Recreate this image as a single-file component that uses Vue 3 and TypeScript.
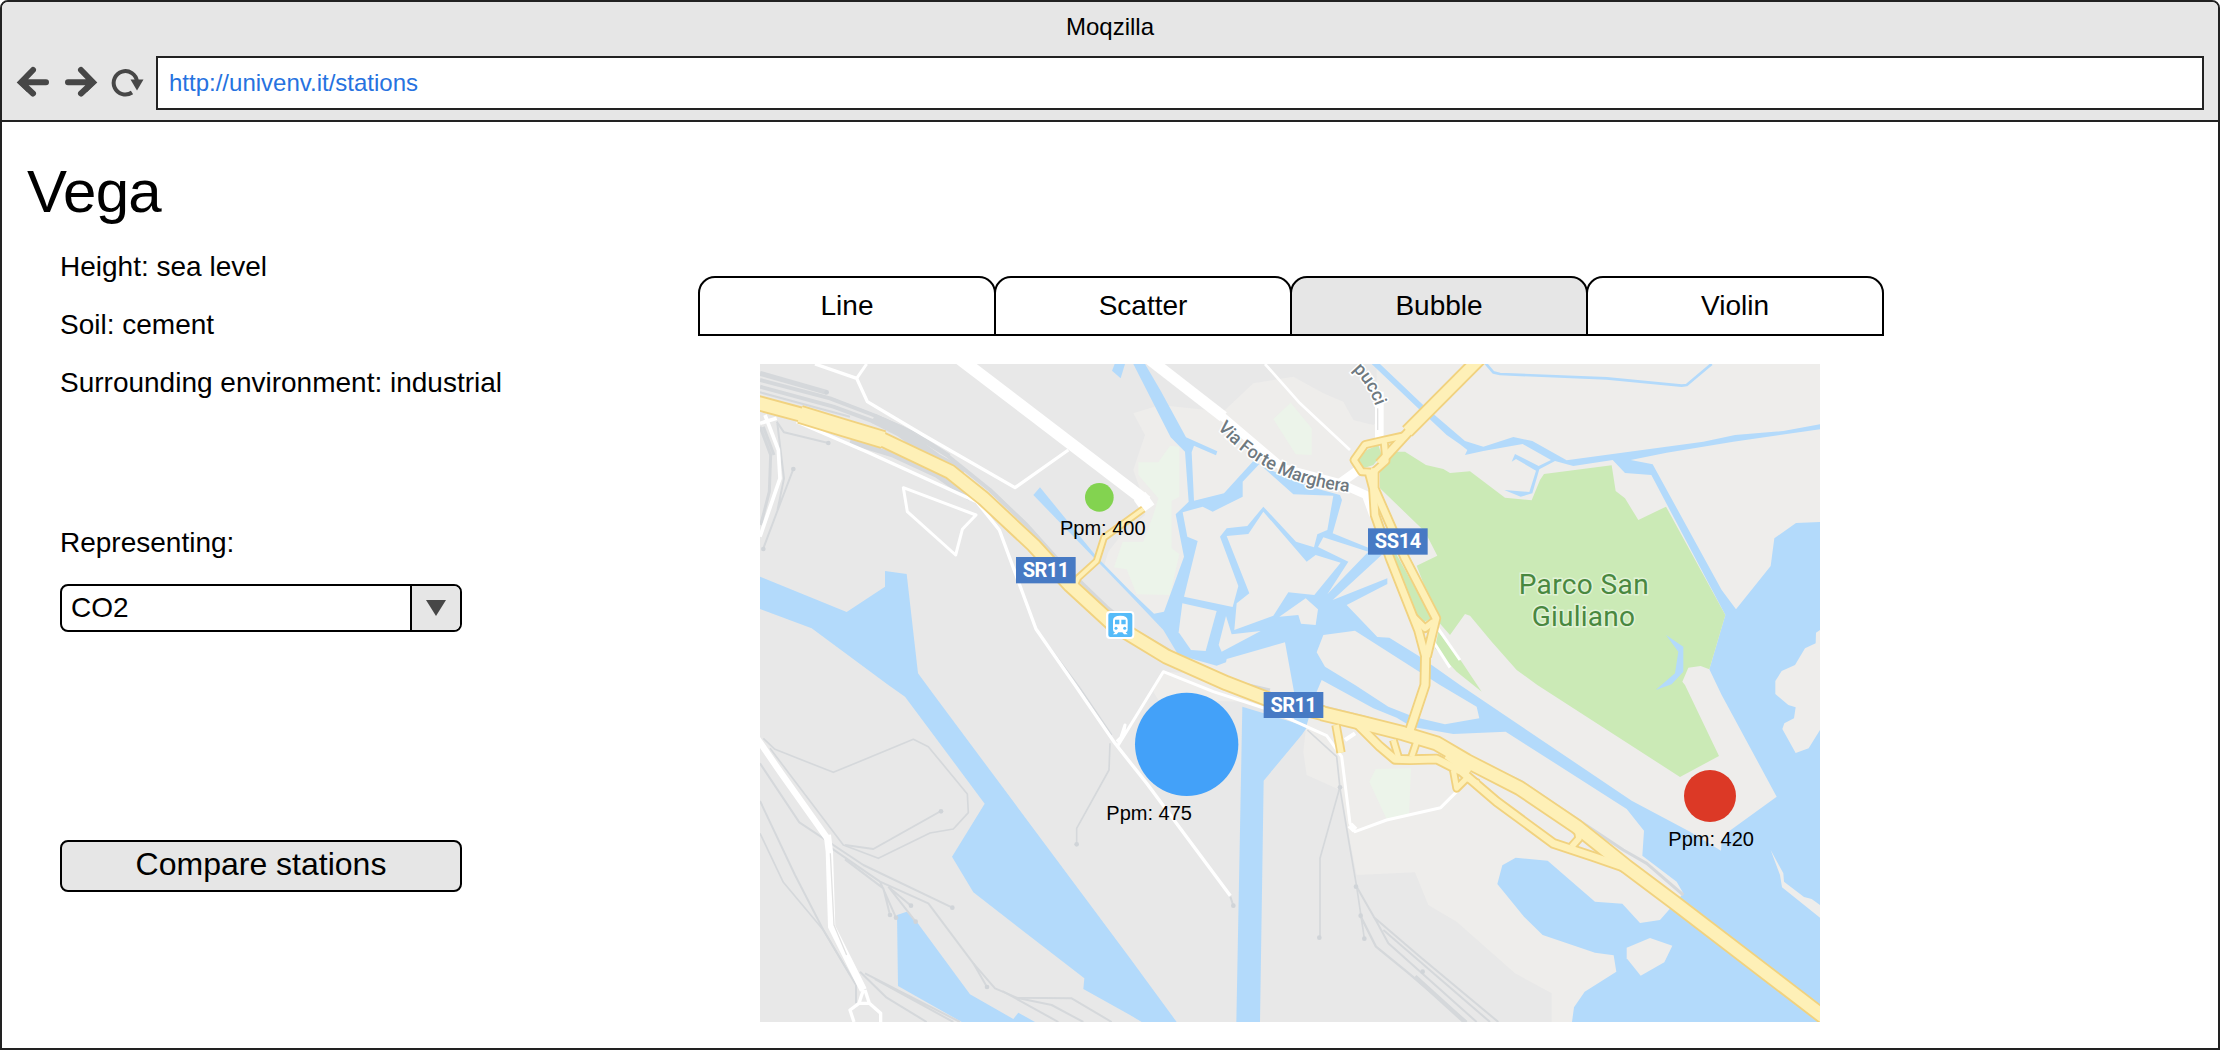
<script setup lang="ts">
interface Stroke { d: string; w: number }
interface Bubble { x: number; y: number; r: number; color: string; label: string; lx: number; ly: number }

const facts: string[] = ['Height: sea level', 'Soil: cement', 'Surrounding environment: industrial']
const tabs: string[] = ['Line', 'Scatter', 'Bubble', 'Violin']
const activeTab = 'Bubble'

const bubbles: Bubble[] = [
  { x: 1048, y: 427, r: 43, color: '#83d350', label: 'Ppm: 400', lx: 930, ly: 541 },
  { x: 1310, y: 1168, r: 155, color: '#43a1f9', label: 'Ppm: 475', lx: 1069, ly: 1395 },
  { x: 2880, y: 1323, r: 78, color: '#dc3926', label: 'Ppm: 420', lx: 2755, ly: 1473 },
]

const suburb =
  '1880,27 1880,200 1870,210 1810,195 1780,140 1720,115 1630,65 1510,85 1425,165 1370,165 1230,150 1150,175 1185,240 1150,345 1180,430 1185,480 1110,545 1075,590 1060,640 1210,775 1290,900 1400,960 1240,950 1210,1010 1225,1035 1500,1040 1670,1100 1660,1190 1670,1260 1770,1305 1820,1560 1995,1552 2035,1650 2120,1700 2295,1855 2405,1915 2405,2001 3210,2001 3210,27'

const water: string[] = [
  '30,665 290,771 405,695 405,648 470,657 504,955 552,1020 1140,1810 1280,2001 1175,2001 1140,1980 1000,1902 1003,1870 670,1612 606,1505 704,1346 465,1025 415,990 185,820 30,762',
  '441,1680 470,1670 500,1700 660,1918 790,1992 805,1973 855,2001 635,2001 444,1893',
  '1477,1055 1672,1115 1655,1140 1541,1277 1530,2001 1459,2001',
  '1150,27 1185,27 1232,107 1308,247 1402,289 1398,301 1332,272 1325,292 1332,437 1422,415 1510,318 1550,340 1680,395 1770,420 1776,435 1748,535 1855,578 1895,600 1748,735 1912,670 1912,687 1790,750 1882,846 1918,848 2010,905 2130,990 2260,1078 2645,1337 2820,1430 2913,1487 2915,1455 2935,1430 3080,1325 2915,1020 2878,943 2926,780 2704,360 2625,354 2588,315 2470,333 2415,318 2368,343 2347,415 2312,425 2263,405 2338,411 2358,347 2298,312 2285,320 2295,297 2366,333 2403,315 2318,267 2200,288 2145,300 2152,285 2130,268 2090,240 2010,165 1865,27 1890,27 2025,155 2145,258 2200,275 2290,246 2347,258 2450,316 2860,260 2955,240 3100,228 3210,208 3210,223 2950,260 2750,293 2642,315 2708,328 2915,705 2958,763 3062,633 3073,550 3138,504 3210,501 3210,2001 2466,2001 2472,1957 2504,1910 2599,1850 2591,1801 2535,1793 2378,1740 2322,1685 2242,1587 2257,1531 2297,1508 2393,1517 2535,1640 2617,1646 2670,1704 2730,1695 2765,1655 2800,1615 2780,1580 2677,1502 2682,1427 2630,1362 2267,1130 2110,1137 1985,1115 1940,1088 1870,1060 1715,975 1700,1010 1670,1110 1632,1100 1632,1010 1605,862 1430,912 1428,922 1400,932 1285,900 1240,825 1140,720 850,420 870,397 1040,605 1140,707 1212,776 1242,770 1302,605 1277,478 1316,440 1305,290 1262,247',
  '1112,70 1086,47 1094,27 1125,27',
]

const islands: string[] = [
  '1298,472 1358,455 1388,470 1478,425 1478,380 1528,327 1630,418 1750,422 1732,525 1702,538 1692,577 1638,560 1540,455 1492,513 1430,520 1410,545 1465,693 1448,756 1302,725 1343,558 1312,545',
  '1430,543 1495,537 1540,470 1670,620 1697,600 1772,623 1693,720 1615,712 1570,782 1453,825 1460,745 1498,715',
  '1297,745 1400,768 1367,888 1323,885 1286,832',
  '1428,783 1445,838 1532,828 1415,890 1406,870',
  '1588,785 1667,730 1704,763 1697,810 1653,806 1645,780',
  '1720,547 1855,590 1732,718 1795,620 1704,576',
  '1720,840 1815,827 2070,990 2180,1055 2188,1090 2085,1108 1995,1087 1915,1055 1815,990 1725,935 1700,892',
  '3210,825 3198,833 3197,865 3165,880 3135,930 3095,948 3076,978 3076,1017 3115,1050 3137,1057 3132,1090 3103,1105 3097,1122 3137,1194 3176,1180 3210,1125',
  '2630,1778 2700,1749 2767,1772 2743,1822 2672,1862 2630,1810',
  '3062,1485 3100,1555 3102,1580 3162,1626 3185,1632 3210,1650 3210,1688 3096,1597 3090,1560',
]

const meadows: string[] = [
  '1570,192 1622,143 1685,220 1685,300 1637,298',
  '1165,322 1225,322 1260,272 1288,275 1288,425 1265,437 1265,580 1288,597 1260,720 1160,718 1130,643 1092,637 1118,560 1180,560 1210,480 1225,430 1165,360',
  '1877,1242 1983,1240 1977,1378 1910,1393 1858,1280',
]

const parks: string[] = [
  '1890,340 1940,290 1965,290 2028,330 2080,342 2100,354 2160,349 2265,428 2345,436 2370,375 2382,357 2585,331 2597,408 2625,430 2665,495 2748,455 2926,780 2878,943 2852,933 2815,938 2797,980 2805,990 2907,1203 2790,1266 2362,990 2300,945 2225,860 2160,782 2145,777 2100,840 2065,800 2000,632 2062,602 2025,530 1890,400',
  '2065,830 2135,920 2195,1010 2120,950 2055,880',
  '1880,460 1935,590 2045,790 2015,805 1995,790',
  '1820,320 1850,285 1885,270 1895,300 1870,330 1840,340',
]
const pond = '2748,840 2800,875 2800,950 2765,988 2717,1005 2775,955 2785,890'

const rails: Stroke[] = [
  { d: 'M30 55 L230 112', w: 15 },
  { d: 'M30 75 L240 130 L370 180 L460 220 L590 300 L720 405 L830 510 L900 590', w: 12 },
  { d: 'M30 95 L250 155 L400 210', w: 12 },
  { d: 'M30 112 L300 185', w: 6 },
  { d: 'M370 190 L450 230 L560 310 L640 355', w: 30 },
  { d: 'M240 128 L400 190 L500 235 L600 300', w: 5 },
  { d: 'M300 260 L430 300 L560 360 L660 430', w: 16 },
  { d: 'M720 405 L840 520 L930 620 L1070 755 L1160 830 L1290 905 L1430 975 L1560 1005', w: 10 },
  { d: 'M80 200 L102 232 L235 264', w: 6 },
  { d: 'M82 205 L102 370 L82 468 L40 580 M130 342 L82 468', w: 6 },
  { d: 'M30 215 L62 300 L58 410 L32 510 M40 215 L72 300', w: 9 },
  { d: 'M858 822 L990 1000 L1085 1140', w: 5 },
  { d: 'M40 1150 L75 1183 L250 1252 L490 1153 L535 1175 L652 1317 L655 1373 L610 1422 L540 1434 L385 1510 L280 1470 L60 1180', w: 5 },
  { d: 'M285 1470 L370 1482 L573 1368', w: 6 },
  { d: 'M30 1225 L148 1402 L340 1530 L607 1658', w: 6 },
  { d: 'M245 1480 L390 1580 L535 1645 L670 1825 L735 1900 L800 1928 L965 1930 L1085 2001', w: 6 },
  { d: 'M285 1513 L400 1600 L420 1680 M390 1580 L438 1688 M415 1595 L497 1700 M415 1595 L483 1652', w: 6 },
  { d: 'M670 1825 L711 1896 M757 1908 L925 2001 M800 1928 L905 1950 L1000 2001', w: 6 },
  { d: 'M30 1338 L135 1560 L220 1725 L318 1890 V1945', w: 6 },
  { d: 'M30 1435 L100 1582 L220 1725 L300 1860', w: 5 },
  { d: 'M330 1850 L410 1928 L530 2001 M345 1855 L630 2001 M375 1872 L610 2001', w: 6 },
  { d: 'M1080 1165 L1077 1245 L980 1420 V1465', w: 5 },
  { d: 'M1441 1625 L1450 1652', w: 6 },
  { d: 'M1672 1125 L1760 1205 L1770 1300 L1798 1468 L1820 1595 L1843 1750', w: 5 },
  { d: 'M1770 1295 L1710 1510 V1745', w: 5 },
  { d: 'M1820 1595 L1880 1700 L1915 1765 L2180 2001 M1870 1685 L2010 1805 L2245 2001 M1900 1725 L2220 2001', w: 6 },
  { d: 'M1830 1680 L1878 1775 L1970 1850 L2150 2001', w: 7 },
  { d: 'M1995 1865 L2145 2001', w: 13 },
  { d: 'M1720 1055 L1840 1085 L2030 1145 L2250 1250 L2315 1280 L2440 1365 L2620 1485 L2690 1525 L2800 1620', w: 9 },
]
const railEnds: number[][] = [
  [230, 112], [235, 264], [130, 342], [40, 582], [573, 1369], [607, 1658], [420, 1680], [438, 1688], [483, 1652],
  [497, 1700], [711, 1896], [980, 1468], [1450, 1652], [1708, 1748], [1843, 1751], [1770, 1297], [1818, 1595], [1832, 1682], [2018, 1850],
]

const streets: Stroke[] = [
  { d: 'M195 27 L320 70 L352 140 L520 240 L795 398 L955 285', w: 10 },
  { d: 'M320 70 L350 27', w: 9 },
  { d: 'M630 12 L1190 440', w: 37 },
  { d: 'M1165 455 L1200 430', w: 46 },
  { d: 'M30 205 L80 190 M45 180 L85 285 L90 370 L30 545', w: 11 },
  { d: 'M140 200 L350 290 L680 440 L748 525 L858 822 L975 990 L1095 1165 L1190 1285 L1441 1622', w: 10 },
  { d: 'M460 398 L678 480 L637 523 L617 600 L472 470 Z', w: 9 },
  { d: 'M1100 1160 L1120 1140 L1125 1110 L1105 1170 L1240 950 L1390 1010 L1560 1065 L1730 1142 L1775 1205 L1800 1405 L1815 1430 L1910 1395 L2072 1358 L2120 1310', w: 9 },
  { d: 'M1785 1155 L1815 1135', w: 12 },
  { d: 'M1800 1410 L1815 1425', w: 20 },
  { d: 'M1545 27 L1650 145 L1800 285', w: 8 },
  { d: 'M1197 12 L1420 185', w: 34 },
  { d: 'M1400 170 L1600 340 L1770 385 L1848 420 L1870 480', w: 25 },
  { d: 'M1770 385 L1825 345', w: 28 },
  { d: 'M1888 110 L1888 250', w: 26 },
  { d: 'M2050 800 L2130 915 M2050 860 L2100 938', w: 9 },
  { d: 'M20 1148 L90 1250 L232 1450', w: 19 },
  { d: 'M232 1440 L238 1490 L245 1715 L340 1905', w: 22 },
  { d: 'M340 1905 L327 1945 L300 1965 L312 2001 M345 1905 L358 1945 L392 1975 V2001 M327 1945 H358', w: 10 },
]

const highways: Stroke[] = [
  { d: 'M20 143 L150 178 L400 255 L600 350 L700 430 L850 570 L960 690 L1085 805 L1250 905 L1430 985 L1560 1035 L1720 1075', w: 48 },
  { d: 'M150 178 L280 218 L400 254', w: 57 },
  { d: 'M1715 1075 L1840 1105 L1960 1135 L2060 1165 L2150 1218 L2310 1300 L2480 1415 L2630 1535 L2770 1640 L3240 2000', w: 48 },
  { d: 'M1800 1085 L1890 1175 L1935 1213 L1980 1214 L2060 1212 L2135 1250 L2240 1340 L2410 1465 L2530 1505 L2660 1550', w: 32 },
  { d: 'M1930 1155 L1945 1205 M2005 1145 L1985 1205', w: 26 },
  { d: 'M1758 1110 L1773 1193', w: 28 },
  { d: 'M2110 1245 L2120 1300 L2150 1270 L2185 1285', w: 26 },
  { d: 'M2090 1200 L2160 1250', w: 34 },
  { d: 'M2482 1420 L2487 1450 L2465 1475', w: 28 },
  { d: 'M2190 10 L1972 229', w: 44 },
  { d: 'M1985 220 L1888 326', w: 32 },
  { d: 'M1960 243 L1900 256 L1845 269 L1812 315 L1835 350 L1870 352 L1908 318 L1903 262', w: 27 },
  { d: 'M1858 355 L1870 400 L1875 480 L1920 610 L2005 825 L2025 900', w: 31 },
  { d: 'M1873 340 L1873 400 L1965 610 L2058 790 L2030 905', w: 31 },
  { d: 'M1990 785 L2025 820 L2050 800', w: 28 },
  { d: 'M2027 895 L2025 990 L1980 1125', w: 33 },
  { d: 'M1180 462 L1062 548 L1040 618 L985 668 L965 710', w: 23 },
]
</script>

<template>
  <div class="window">
    <header class="chrome">
      <div class="title">Moqzilla</div>
      <div class="toolbar">
        <svg class="nav" width="156" height="54" viewBox="0 0 156 54" fill="none">
          <g stroke="#474747" stroke-width="6" stroke-linecap="round">
            <path d="M46 26.3H22M33 14L21 26.3L33 37.5" />
            <path d="M68 26.3H92M81 14L93 26.3L81 37.5" />
          </g>
          <path d="M17.5 26.3L27 17v19z M96.500 26.3L87 17v19z" fill="#474747" />
          <path d="M132 36.500a11.700 11.700 0 1 1 5-11" stroke="#474747" stroke-width="4" />
          <path d="M130.500 23.500h13l-6.500 11z" fill="#474747" />
        </svg>
        <div class="address">http://univenv.it/stations</div>
      </div>
    </header>

    <main class="page">
      <section class="station">
        <h1>Vega</h1>
        <p v-for="fact in facts" :key="fact" class="fact">{{ fact }}</p>
        <label class="caption">Representing:</label>
        <div class="select">
          <span class="value">CO2</span>
          <span class="arrow"><svg width="20" height="16" viewBox="0 0 20 16"><path d="M0 0h20L10 16z" fill="#474747" /></svg></span>
        </div>
        <button class="compare" type="button">Compare stations</button>
      </section>

      <section class="chart">
        <nav class="tabs">
          <span v-for="tab in tabs" :key="tab" class="tab" :class="{ active: tab === activeTab }">{{ tab }}</span>
        </nav>
        <svg class="map" width="1060" height="658" viewBox="30 27 3180 1974">
          <rect x="30" y="27" width="3180" height="1974" fill="#e8e8e8" />
          <polygon :points="suburb" fill="#eeedeb" />
          <polygon v-for="p in meadows" :key="p" :points="p" fill="#ecf4ea" />
          <polygon v-for="p in water" :key="p" :points="p" fill="#b3dafb" />
          <polygon v-for="p in islands" :key="p" :points="p" fill="#eeedeb" />
          <polygon v-for="p in parks" :key="p" :points="p" fill="#cbeab6" />
          <polygon :points="pond" fill="#b3dafb" />
          <path d="M2207 25L2230 52L2250 57L2570 70L2795 92L2810 90L2885 27" class="line" stroke="#b3dafb" stroke-width="8" />
          <path v-for="s in rails" :key="s.d" :d="s.d" class="line" stroke="#d5d8db" :stroke-width="s.w" />
          <circle v-for="(e, i) in railEnds" :key="i" :cx="e[0]" :cy="e[1]" r="7" fill="#d0d4d8" />
          <path v-for="s in streets" :key="s.d" :d="s.d" class="line" stroke="#ffffff" :stroke-width="s.w" />
          <path d="M241 1495L252 1710L290 1800M1883 160V225" class="line" stroke="#e2e2e2" stroke-width="4" />
          <path v-for="s in highways" :key="'c' + s.d" :d="s.d" class="line" stroke="#f1d27f" :stroke-width="s.w" />
          <path v-for="s in highways" :key="'f' + s.d" :d="s.d" class="line" stroke="#fef0b7" :stroke-width="s.w - 11" />

          <g class="road-name">
            <path id="forte-path" d="M1402 219C1490 318 1620 399 1830 414" fill="none" />
            <path id="pucci-path" d="M1808 44C1840 75 1858 108 1872 140L1900 210" fill="none" />
            <text textLength="450"><textPath href="#forte-path">Via Forte Marghera</textPath></text>
            <text><textPath href="#pucci-path">pucci</textPath></text>
          </g>
          <g class="park-name">
            <text x="2501" y="717" textLength="390">Parco San</text>
            <text x="2500" y="812" textLength="310">Giuliano</text>
          </g>

          <g class="shield">
            <rect x="798" y="606" width="179" height="79" />
            <text x="888" y="667" textLength="139">SR11</text>
            <rect x="1854" y="520" width="179" height="79" />
            <text x="1944" y="580" textLength="139">SS14</text>
            <rect x="1541" y="1011" width="179" height="78" />
            <text x="1631" y="1071" textLength="139">SR11</text>
          </g>
          <g transform="translate(1068 768)">
            <rect width="85" height="84" rx="12" fill="#ffffff" />
            <rect x="7" y="6" width="72" height="72" rx="6" fill="#55bbf9" />
            <path d="M21 28q0-14 22-14t22 14v28q0 6-6 8l6 6H54l-5-6H37l-5 6H21l6-6q-6-2-6-8z" fill="#ffffff" />
            <path d="M27 26h13v14H27zM46 26h13v14H46z" fill="#55bbf9" />
            <circle cx="30" cy="52" r="4.500" fill="#55bbf9" />
            <circle cx="56" cy="52" r="4.500" fill="#55bbf9" />
          </g>

          <g v-for="b in bubbles" :key="b.label" class="bubble">
            <circle :cx="b.x" :cy="b.y" :r="b.r" :fill="b.color" />
            <text :x="b.lx" :y="b.ly">{{ b.label }}</text>
          </g>
        </svg>
      </section>
    </main>
  </div>
</template>

<style>
body {
  margin: 0;
  background: #fff;
}
</style>

<style scoped>
.window {
  box-sizing: border-box;
  width: 2220px;
  height: 1050px;
  border: 2px solid #222;
  border-radius: 8px 8px 0 0;
  overflow: hidden;
  background: #fff;
  color: #000;
  font: 28px/1 "Liberation Sans", Arial, sans-serif;
}
.chrome {
  box-sizing: border-box;
  height: 120px;
  background: #e6e6e6;
  border-bottom: 2px solid #222;
}
.title {
  height: 54px;
  padding-bottom: 4px;
  box-sizing: border-box;
  font-size: 24px;
  line-height: 50px;
  text-align: center;
}
.toolbar {
  display: flex;
  padding-right: 14px;
}
.nav {
  flex: none;
  margin-left: -2px;
}
.address {
  box-sizing: border-box;
  flex: 1;
  height: 54px;
  padding-left: 11px;
  border: 2px solid #222;
  background: #fff;
  color: #2672e0;
  font-size: 24px;
  line-height: 50px;
}
.page {
  display: flex;
}
.station {
  display: flex;
  flex-direction: column;
  width: 696px;
  padding-left: 58px;
  box-sizing: border-box;
}
h1 {
  margin: 40px 0 16px -33px;
  font-size: 60px;
  font-weight: 400;
  line-height: 60px;
  letter-spacing: -0.7px;
}
.fact {
  margin: 0;
  height: 58px;
  line-height: 58px;
}
.caption {
  margin-top: 102px;
  line-height: 58px;
}
.select {
  display: flex;
  box-sizing: border-box;
  width: 402px;
  height: 48px;
  margin-top: 12px;
  border: 2px solid #000;
  border-radius: 8px;
  overflow: hidden;
}
.value {
  flex: 1;
  padding-left: 9px;
  line-height: 44px;
}
.arrow {
  display: flex;
  align-items: center;
  justify-content: center;
  box-sizing: border-box;
  width: 50px;
  border-left: 2px solid #000;
  background: #e6e6e6;
}
.compare {
  width: 402px;
  height: 52px;
  margin-top: 208px;
  padding: 0 0 3px;
  border: 2px solid #000;
  border-radius: 8px;
  background: #e6e6e6;
  color: #000;
  font: 32px/45px "Liberation Sans", Arial, sans-serif;
}
.chart {
  padding-top: 154px;
}
.tabs {
  display: flex;
}
.tab {
  box-sizing: border-box;
  width: 298px;
  height: 60px;
  border: 2px solid #000;
  border-radius: 17px 17px 0 0;
  line-height: 55px;
  text-align: center;
}
.tab + .tab {
  margin-left: -2px;
}
.tab.active {
  background: #e6e6e6;
}
.map {
  display: block;
  margin: 28px 0 0 62px;
}
.line {
  fill: none;
  stroke-linejoin: round;
  stroke-linecap: butt;
}
.road-name text {
  font: 500 54px Roboto, sans-serif;
  fill: #6e7980;
  stroke: #fff;
  stroke-width: 9px;
  paint-order: stroke;
}
.park-name text {
  font: 400 84px Roboto, sans-serif;
  fill: #498840;
  stroke: #e2f3d6;
  stroke-width: 9px;
  paint-order: stroke;
  text-anchor: middle;
}
.shield rect {
  fill: #477ac4;
}
.shield text {
  font: 700 60px Roboto, sans-serif;
  fill: #fff;
  text-anchor: middle;
}
.bubble text {
  font: 60px "Liberation Sans", Arial, sans-serif;
}
</style>
